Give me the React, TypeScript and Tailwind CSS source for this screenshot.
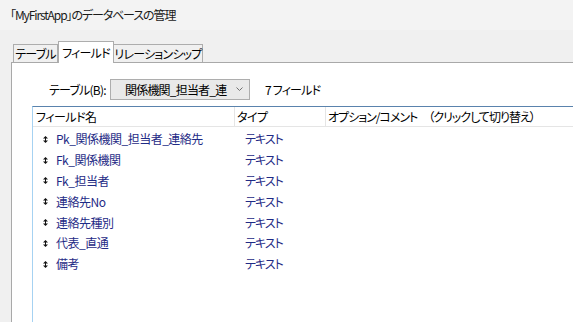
import React from 'react';

const fields = [
  'Pk_関係機関_担当者_連絡先',
  'Fk_関係機関',
  'Fk_担当者',
  '連絡先No',
  '連絡先種別',
  '代表_直通',
  '備考',
];

const font = "font-['Yu_Gothic_UI','Noto_Sans_CJK_JP',sans-serif] [font-feature-settings:'palt']";

const SortIcon: React.FC = () => (
  <svg width="5" height="7" viewBox="0 0 5 7" className="shrink-0">
    <path d="M2.5 0 L5 2.5 L0 2.5 Z" fill="#111" />
    <path d="M0 4.5 L5 4.5 L2.5 7 Z" fill="#111" />
    <rect x="2" y="2" width="1" height="3" fill="#111" />
  </svg>
);

const App: React.FC = () => {
  return (
    <div className={`w-[573px] h-[322px] overflow-hidden bg-[#f0f0f0] text-[12px] tracking-[-0.5px] text-black whitespace-nowrap ${font}`}>
      {/* タイトル */}
      <div className="h-[30px] flex items-center pl-[10px] bg-[#f3f3f3] text-[12px] tracking-[-1.1px] text-[#1a1a1a]">
        「MyFirstApp」のデータベースの管理
      </div>

      {/* タブ */}
      <div className="flex items-end pl-[13px] mt-[11px] h-[21px] tracking-[-0.8px]">
        <div className="w-[45px] h-[18px] flex items-center justify-center border border-b-0 border-[#adadad] bg-[#f0f0f0]">
          テーブル
        </div>
        <div className="relative z-10 w-[56px] h-[22px] -mb-px flex items-center justify-center border border-b-0 border-[#adadad] bg-white">
          フィールド
        </div>
        <div className="w-[89px] h-[18px] flex items-center justify-center border border-b-0 border-l-0 border-[#adadad] bg-[#f0f0f0]">
          リレーションシップ
        </div>
      </div>

      {/* パネル */}
      <div className="ml-[11px] h-[300px] border-t border-l border-[#a9a9a9] bg-white">
        <div className="flex items-center pl-[37px] pt-[16px]">
          <div className="w-[61px] tracking-[-0.8px]">テーブル(B):</div>
          <div className="w-[140px] h-[21px] flex items-center justify-between pl-[14px] pr-[6px] border border-[#adadad] bg-[#e9e9e9] tracking-[-0.8px]">
            <span>関係機関_担当者_連</span>
            <svg width="7" height="5" viewBox="0 0 7 5">
              <path d="M0.5 0.5 L3.5 3.5 L6.5 0.5" stroke="#707070" strokeWidth="1" fill="none" />
            </svg>
          </div>
          <div className="ml-[15px] tracking-[-0.8px]">7 フィールド</div>
        </div>

        {/* フィールド一覧 */}
        <div className="ml-[20px] mt-[6px] h-[220px] border-t border-l border-t-[#5a83ad] border-l-[#a6d2f2]">
          <div className="flex h-[20px] border-b border-[#e5e5e5] items-center">
            <div className="w-[202px] h-full flex items-center pl-[3px] border-r border-[#e5e5e5]">フィールド名</div>
            <div className="w-[91px] h-full flex items-center pl-[2px] border-r border-[#e5e5e5]">タイプ</div>
            <div className="flex-1 h-full flex items-center pl-[2px] tracking-[-1px]">
              オプション/コメント　（クリックして切り替え）
            </div>
          </div>
          <div className="pt-[2px]">
            {fields.map((f) => (
              <div key={f} className="flex items-center h-[20.8px] text-[#1f2b86]">
                <div className="w-[202px] flex items-center pl-[10px] gap-[8px]">
                  <SortIcon />
                  <span>{f}</span>
                </div>
                <div className="pl-[10px] tracking-[-1px]">テキスト</div>
              </div>
            ))}
          </div>
        </div>
      </div>
    </div>
  );
};

export default App;
